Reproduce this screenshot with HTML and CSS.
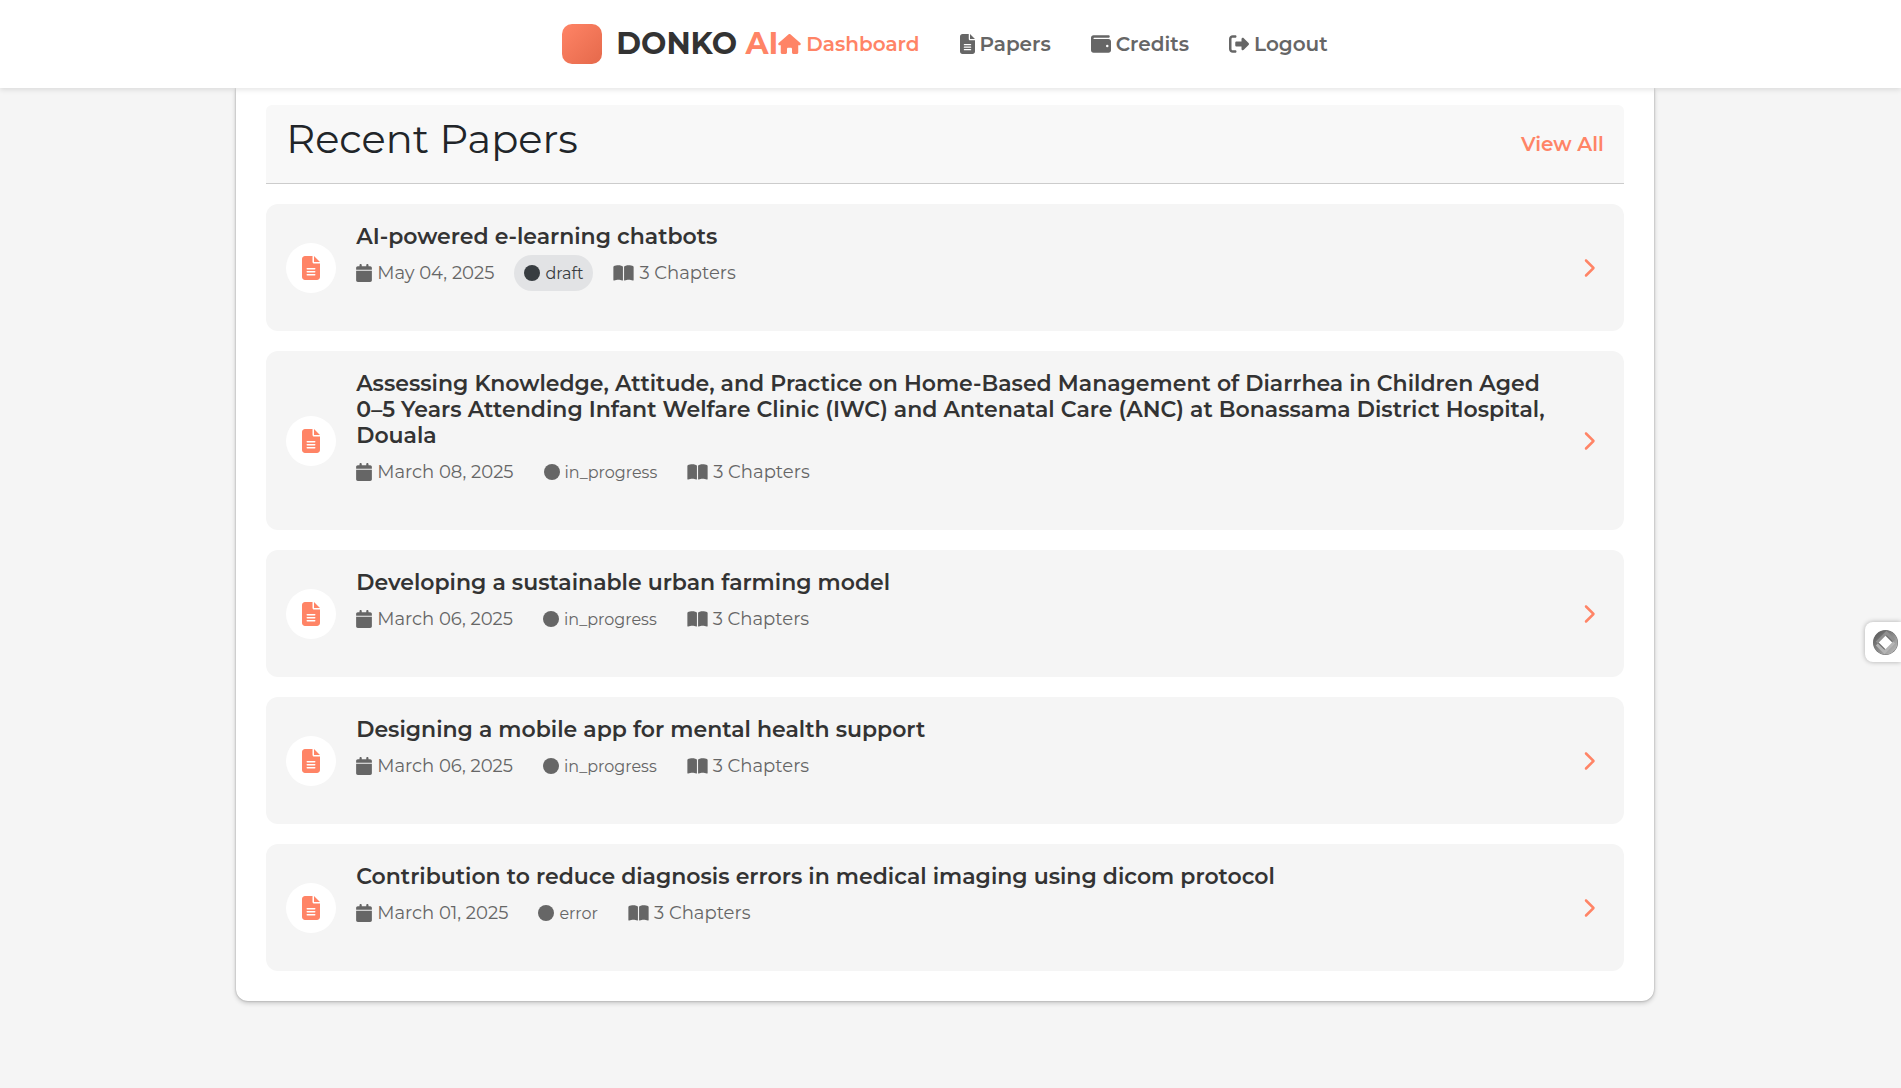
FILE: index.html
```html
<!DOCTYPE html>
<html lang="en">

<head>
    <meta charset="UTF-8">
    <meta name="viewport" content="width=device-width, initial-scale=1.0">
    <title>DONKO AI - Dashboard</title>
    <link rel="stylesheet" href="styles.css">
</head>

<body>
    <!-- Icon set -->
    <svg class="icon-sprite" aria-hidden="true">
        <symbol id="icon-home" viewBox="0 0 576 512"><path d="M575.8 255.5c0 18-15 32.1-32 32.1h-32l.7 160.2c0 2.7-.2 5.4-.5 8.1V472c0 22.1-17.9 40-40 40H456c-1.1 0-2.2 0-3.3-.1c-1.4 .1-2.8 .1-4.2 .1H416 392c-22.1 0-40-17.9-40-40V448 384c0-17.7-14.3-32-32-32H256c-17.7 0-32 14.3-32 32v64 24c0 22.1-17.9 40-40 40H160 128.1c-1.5 0-3-.1-4.5-.2c-1.2 .1-2.4 .2-3.6 .2H104c-22.1 0-40-17.9-40-40V360c0-.9 0-1.9 .1-2.8V287.6H32c-18 0-32-14-32-32.1c0-9 3-17 10-24L266.4 8c7-7 15-8 22-8s15 2 21 7L564.8 231.5c8 7 12 15 11 24z"/></symbol>
        <symbol id="icon-file" viewBox="0 0 384 512"><path d="M64 0C28.7 0 0 28.7 0 64V448c0 35.3 28.7 64 64 64H320c35.3 0 64-28.7 64-64V160H256c-17.7 0-32-14.3-32-32V0H64zM256 0V128H384L256 0zM112 256H272c8.800 0 16 7.200 16 16s-7.200 16-16 16H112c-8.800 0-16-7.200-16-16s7.200-16 16-16zm0 64H272c8.800 0 16 7.200 16 16s-7.200 16-16 16H112c-8.800 0-16-7.200-16-16s7.200-16 16-16zm0 64H272c8.800 0 16 7.200 16 16s-7.200 16-16 16H112c-8.800 0-16-7.200-16-16s7.200-16 16-16z" fill-rule="evenodd"/></symbol>
        <symbol id="icon-wallet" viewBox="0 0 512 512"><path d="M64 32C28.7 32 0 60.7 0 96V416c0 35.3 28.7 64 64 64H448c35.3 0 64-28.7 64-64V192c0-35.3-28.7-64-64-64H80c-8.800 0-16-7.200-16-16s7.200-16 16-16H448c17.7 0 32-14.3 32-32s-14.3-32-32-32H64zM416 272a32 32 0 1 1 0 64 32 32 0 1 1 0-64z" fill-rule="evenodd"/></symbol>
        <symbol id="icon-logout" viewBox="0 0 512 512"><path d="M377.9 105.9L500.7 228.7c7.2 7.2 11.3 17.1 11.3 27.3s-4.1 20.1-11.3 27.3L377.9 406.1c-6.4 6.4-15 9.9-24 9.9c-18.7 0-33.9-15.2-33.9-33.9l0-62.1-128 0c-17.7 0-32-14.3-32-32l0-64c0-17.7 14.3-32 32-32l128 0 0-62.1c0-18.7 15.2-33.9 33.9-33.9c9 0 17.6 3.6 24 9.9zM160 96L96 96c-17.7 0-32 14.3-32 32l0 256c0 17.7 14.3 32 32 32l64 0c17.7 0 32 14.3 32 32s-14.3 32-32 32l-64 0c-53 0-96-43-96-96L0 128C0 75 43 32 96 32l64 0c17.7 0 32 14.3 32 32s-14.3 32-32 32z"/></symbol>
        <symbol id="icon-calendar" viewBox="0 0 448 512"><path d="M96 32V64H48C21.5 64 0 85.5 0 112v48H448V112c0-26.5-21.5-48-48-48H352V32c0-17.7-14.3-32-32-32s-32 14.3-32 32V64H160V32c0-17.7-14.3-32-32-32S96 14.3 96 32zM448 192H0V464c0 26.5 21.5 48 48 48H400c26.5 0 48-21.5 48-48V192z"/></symbol>
        <symbol id="icon-circle" viewBox="0 0 512 512"><circle cx="256" cy="256" r="256"/></symbol>
        <symbol id="icon-book" viewBox="0 0 576 512"><path d="M249.6 471.5c10.8 3.8 22.4-4.1 22.4-15.5V78.6c0-4.2-1.6-8.4-5-11C247.4 52 202.4 32 144 32C93.5 32 46.3 45.3 18.1 56.1C6.8 60.5 0 71.7 0 83.8V454.1c0 11.9 12.8 20.2 24.1 16.5C55.6 460.1 105.5 448 144 448c33.9 0 79 14 105.6 23.5zm76.8 0C353 462 398.1 448 432 448c38.5 0 88.4 12.1 119.9 22.6c11.3 3.8 24.1-4.6 24.1-16.5V83.8c0-12.1-6.8-23.3-18.1-27.6C529.7 45.3 482.5 32 432 32c-58.4 0-103.4 20-123 35.6c-3.3 2.6-5 6.8-5 11V456c0 11.4 11.7 19.3 22.4 15.5z"/></symbol>
        <symbol id="icon-chevron" viewBox="0 0 320 512"><path d="M310.6 233.4c12.5 12.5 12.5 32.8 0 45.3l-192 192c-12.5 12.5-32.8 12.5-45.3 0s-12.5-32.8 0-45.3L242.7 256 73.4 86.6c-12.5-12.5-12.5-32.8 0-45.3s32.8-12.5 45.3 0l192 192z"/></symbol>
    </svg>

    <header class="navbar">
        <a href="#" class="logo">
            <span class="logo-mark"></span>
            <span class="logo-text">DONKO <span class="accent">AI</span></span>
        </a>
        <nav class="nav-links">
            <a href="#" class="nav-link active"><svg class="icon icon-wide"><use href="#icon-home"/></svg>Dashboard</a>
            <a href="#" class="nav-link"><svg class="icon icon-narrow"><use href="#icon-file"/></svg>Papers</a>
            <a href="#" class="nav-link"><svg class="icon"><use href="#icon-wallet"/></svg>Credits</a>
            <a href="#" class="nav-link"><svg class="icon"><use href="#icon-logout"/></svg>Logout</a>
        </nav>
    </header>

    <main class="container">
        <section class="recent-papers">
            <div class="section-header">
                <h2>Recent Papers</h2>
                <a href="#" class="view-all">View All</a>
            </div>

            <div class="papers-list">
                <article class="paper-card">
                    <div class="paper-icon"><svg><use href="#icon-file"/></svg></div>
                    <div class="paper-info">
                        <h3>AI-powered e-learning chatbots</h3>
                        <div class="paper-meta">
                            <span class="meta-item"><svg class="meta-icon"><use href="#icon-calendar"/></svg>May 04, 2025</span>
                            <span class="meta-item status status-draft"><svg class="meta-icon"><use href="#icon-circle"/></svg>draft</span>
                            <span class="meta-item"><svg class="meta-icon meta-book"><use href="#icon-book"/></svg>3 Chapters</span>
                        </div>
                    </div>
                    <a href="#" class="paper-link" aria-label="Open paper"><svg><use href="#icon-chevron"/></svg></a>
                </article>

                <article class="paper-card">
                    <div class="paper-icon"><svg><use href="#icon-file"/></svg></div>
                    <div class="paper-info">
                        <h3>Assessing Knowledge, Attitude, and Practice on Home-Based Management of Diarrhea in Children Aged 0–5 Years Attending Infant Welfare Clinic (IWC) and Antenatal Care (ANC) at Bonassama District Hospital, Douala</h3>
                        <div class="paper-meta">
                            <span class="meta-item"><svg class="meta-icon"><use href="#icon-calendar"/></svg>March 08, 2025</span>
                            <span class="meta-item status"><svg class="meta-icon"><use href="#icon-circle"/></svg>in_progress</span>
                            <span class="meta-item"><svg class="meta-icon meta-book"><use href="#icon-book"/></svg>3 Chapters</span>
                        </div>
                    </div>
                    <a href="#" class="paper-link" aria-label="Open paper"><svg><use href="#icon-chevron"/></svg></a>
                </article>

                <article class="paper-card">
                    <div class="paper-icon"><svg><use href="#icon-file"/></svg></div>
                    <div class="paper-info">
                        <h3>Developing a sustainable urban farming model</h3>
                        <div class="paper-meta">
                            <span class="meta-item"><svg class="meta-icon"><use href="#icon-calendar"/></svg>March 06, 2025</span>
                            <span class="meta-item status"><svg class="meta-icon"><use href="#icon-circle"/></svg>in_progress</span>
                            <span class="meta-item"><svg class="meta-icon meta-book"><use href="#icon-book"/></svg>3 Chapters</span>
                        </div>
                    </div>
                    <a href="#" class="paper-link" aria-label="Open paper"><svg><use href="#icon-chevron"/></svg></a>
                </article>

                <article class="paper-card">
                    <div class="paper-icon"><svg><use href="#icon-file"/></svg></div>
                    <div class="paper-info">
                        <h3>Designing a mobile app for mental health support</h3>
                        <div class="paper-meta">
                            <span class="meta-item"><svg class="meta-icon"><use href="#icon-calendar"/></svg>March 06, 2025</span>
                            <span class="meta-item status"><svg class="meta-icon"><use href="#icon-circle"/></svg>in_progress</span>
                            <span class="meta-item"><svg class="meta-icon meta-book"><use href="#icon-book"/></svg>3 Chapters</span>
                        </div>
                    </div>
                    <a href="#" class="paper-link" aria-label="Open paper"><svg><use href="#icon-chevron"/></svg></a>
                </article>

                <article class="paper-card">
                    <div class="paper-icon"><svg><use href="#icon-file"/></svg></div>
                    <div class="paper-info">
                        <h3>Contribution to reduce diagnosis errors in medical imaging using dicom protocol</h3>
                        <div class="paper-meta">
                            <span class="meta-item"><svg class="meta-icon"><use href="#icon-calendar"/></svg>March 01, 2025</span>
                            <span class="meta-item status"><svg class="meta-icon"><use href="#icon-circle"/></svg>error</span>
                            <span class="meta-item"><svg class="meta-icon meta-book"><use href="#icon-book"/></svg>3 Chapters</span>
                        </div>
                    </div>
                    <a href="#" class="paper-link" aria-label="Open paper"><svg><use href="#icon-chevron"/></svg></a>
                </article>
            </div>
        </section>
    </main>

    <!-- Floating side button -->
    <button type="button" class="side-widget" aria-label="Open assistant">
        <svg viewBox="0 0 26 26">
            <defs>
                <linearGradient id="band" x1="0" y1="0" x2="1" y2="1">
                    <stop offset="0" stop-color="#5c5c5c"/>
                    <stop offset="1" stop-color="#b8b8b8"/>
                </linearGradient>
            </defs>
            <circle cx="13" cy="13" r="13" fill="#6f6f6f"/>
            <circle cx="13" cy="13" r="10" fill="none" stroke="url(#band)" stroke-width="5"/>
            <path d="M4 13L14 3L22 11" fill="none" stroke="#8f8f8f" stroke-width="3"/>
            <path d="M22 13L12 23L4 15" fill="none" stroke="#b5b5b5" stroke-width="3"/>
            <path d="M13 6L20 13L13 20L6 13Z" fill="#ffffff"/>
        </svg>
    </button>
</body>

</html>
```
FILE: styles.css
```css
* {
    box-sizing: border-box;
}

body {
    margin: 0;
    padding-right: 11px;
    min-height: 100vh;
    font-family: Montserrat, Inter, sans-serif;
    font-size: 18px;
    color: #212529;
    background-color: #f5f5f5;
}

a {
    color: inherit;
    text-decoration: none;
}

svg {
    fill: currentColor;
    flex-shrink: 0;
}

.icon-sprite {
    display: none;
}

/* Navbar */
.navbar {
    position: sticky;
    top: 0;
    z-index: 10;
    display: flex;
    justify-content: center;
    align-items: center;
    height: 88px;
    margin-right: -11px;
    padding-right: 11px;
    background-color: #fff;
    box-shadow: 0 2px 5px rgba(0, 0, 0, 0.1);
}

.logo {
    display: flex;
    align-items: center;
    gap: 14px;
}

.logo-mark {
    width: 40px;
    height: 40px;
    border-radius: 10px;
    background: linear-gradient(135deg, #ff8466, #e5694b);
}

.logo-text {
    font-size: 30px;
    font-weight: 700;
    line-height: 36px;
    color: #333;
}

.accent {
    color: #ff8466;
}

.nav-links {
    display: flex;
    gap: 40px;
}

.nav-link {
    display: flex;
    align-items: center;
    gap: 5px;
    font-size: 20px;
    font-weight: 600;
    color: #666;
}

.nav-link.active {
    color: #ff8466;
}

.icon {
    width: 20px;
    height: 20px;
}

.icon-wide {
    width: 23px;
}

.icon-narrow {
    width: 15px;
}

/* Main container */
.container {
    width: 75%;
    margin: 0 auto;
}

.recent-papers {
    padding: 17px 30px 30px;
    background-color: #fff;
    border-radius: 0 0 12px 12px;
    box-shadow: 0 2px 5px rgba(0, 0, 0, 0.2), 0 0 2px rgba(0, 0, 0, 0.3);
}

.section-header {
    display: flex;
    justify-content: space-between;
    align-items: center;
    height: 79px;
    padding: 0 20px;
    margin-bottom: 20px;
    background-color: #f8f8f8;
    border-bottom: 1px solid #ccc;
    border-radius: 6px 6px 0 0;
}

.section-header h2 {
    margin: 0;
    padding-bottom: 12px;
    font-size: 40px;
    font-weight: 400;
}

.view-all {
    font-size: 20px;
    font-weight: 600;
    color: #ff8466;
}

/* Papers */
.papers-list {
    display: flex;
    flex-direction: column;
    gap: 20px;
}

.paper-card {
    display: flex;
    align-items: center;
    gap: 20px;
    padding: 20px;
    background-color: #f5f5f5;
    border-radius: 12px;
}

.paper-icon {
    display: flex;
    justify-content: center;
    align-items: center;
    flex-shrink: 0;
    width: 50px;
    height: 50px;
    background-color: #fff;
    border-radius: 50%;
    color: #ff8466;
}

.paper-icon svg {
    width: 18px;
    height: 24px;
}

.paper-info {
    flex: 1;
}

.paper-info h3 {
    margin: 0 0 5px;
    font-size: 22px;
    font-weight: 600;
    line-height: 26px;
    color: #333;
}

.paper-meta {
    display: flex;
    align-items: center;
    gap: 20px;
    height: 36px;
    margin-bottom: 20px;
    color: #666;
}

.meta-item {
    display: flex;
    align-items: center;
    gap: 5px;
    font-size: 18px;
    font-weight: 400;
}

.meta-icon {
    width: 16px;
    height: 18px;
}

.meta-book {
    width: 21px;
}

.status {
    height: 36px;
    padding: 0 10px;
    border-radius: 18px;
    font-size: 16px;
}

.status-draft {
    background-color: #e2e3e5;
    color: #383d41;
}

.paper-link {
    display: flex;
    padding: 9px;
    color: #ff8466;
}

.paper-link svg {
    width: 13px;
    height: 20px;
}

/* Side widget */
.side-widget {
    position: fixed;
    right: 0;
    top: 622px;
    display: flex;
    align-items: center;
    width: 36px;
    height: 40px;
    padding: 0 0 0 8px;
    border: none;
    border-radius: 8px 0 0 8px;
    background-color: #fff;
    box-shadow: 0 0 5px rgba(0, 0, 0, 0.3);
}

.side-widget svg {
    width: 25px;
    height: 25px;
}
```
